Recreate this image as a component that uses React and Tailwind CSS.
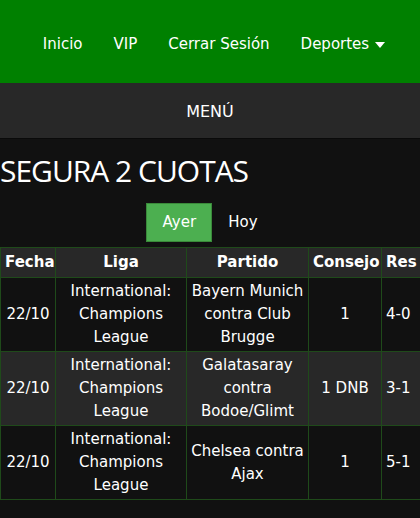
const rows = [
  { fecha: "22/10", liga: "International: Champions League", partido: "Bayern Munich contra Club Brugge", consejo: "1", res: "4-0" },
  { fecha: "22/10", liga: "International: Champions League", partido: "Galatasaray contra Bodoe/Glimt", consejo: "1 DNB", res: "3-1" },
  { fecha: "22/10", liga: "International: Champions League", partido: "Chelsea contra Ajax", consejo: "1", res: "5-1" },
];

const cell = "border border-[#1f4a1a] px-[4px] py-[2px] text-center align-middle";
const head = "border border-[#1f4a1a] px-[4px] py-[3px] text-center align-middle";

export default function App() {
  return (
    <div className="min-h-[518px] overflow-hidden bg-[#111111] text-white font-['DejaVu_Sans',Verdana,sans-serif]">
      <nav className="flex h-[83px] items-center justify-center gap-[31px] bg-[#008000] pl-[8px] pt-[6px] text-[15px]">
        <a>Inicio</a>
        <a>VIP</a>
        <a>Cerrar Sesión</a>
        <a className="flex items-center gap-[6px]">
          Deportes
          <svg width="10" height="6" viewBox="0 0 10 6">
            <path d="M0 0h10L5 6z" fill="white" />
          </svg>
        </a>
      </nav>
      <div className="flex h-[56px] items-center justify-center border-b border-[#0a0a0a] bg-[#282828] pt-[2px] text-[16px]">
        MENÚ
      </div>

      <h1 className="mt-[14px] font-['Open_Sans',sans-serif] text-[30px] leading-[36px] tracking-[-1px]">
        SEGURA 2 CUOTAS
      </h1>

      <div className="mt-[14px] flex justify-center text-[15px]">
        <button className="h-[39px] w-[66px] border border-[#3a8a3a] bg-[#4caf50]">Ayer</button>
        <button className="h-[39px] px-[16px]">Hoy</button>
      </div>

      <table className="mt-[5px] w-[441px] table-fixed border-collapse text-[15px] leading-[23px]">
        <thead>
          <tr className="bg-[#282828] font-bold">
            <th className={head + " w-[55px]"}>Fecha</th>
            <th className={head + " w-[131px]"}>Liga</th>
            <th className={head + " w-[122px]"}>Partido</th>
            <th className={head + " w-[73px]"}>Consejo</th>
            <th className={head + " w-[60px] text-left"}>Res</th>
          </tr>
        </thead>
        <tbody>
          {rows.map((r, i) => (
            <tr key={i} className={i % 2 === 1 ? "bg-[#282828]" : "bg-[#111111]"}>
              <td className={cell}>{r.fecha}</td>
              <td className={cell}>{r.liga}</td>
              <td className={cell}>{r.partido}</td>
              <td className={cell}>{r.consejo}</td>
              <td className={cell + " text-left"}>{r.res}</td>
            </tr>
          ))}
        </tbody>
      </table>
    </div>
  );
}
